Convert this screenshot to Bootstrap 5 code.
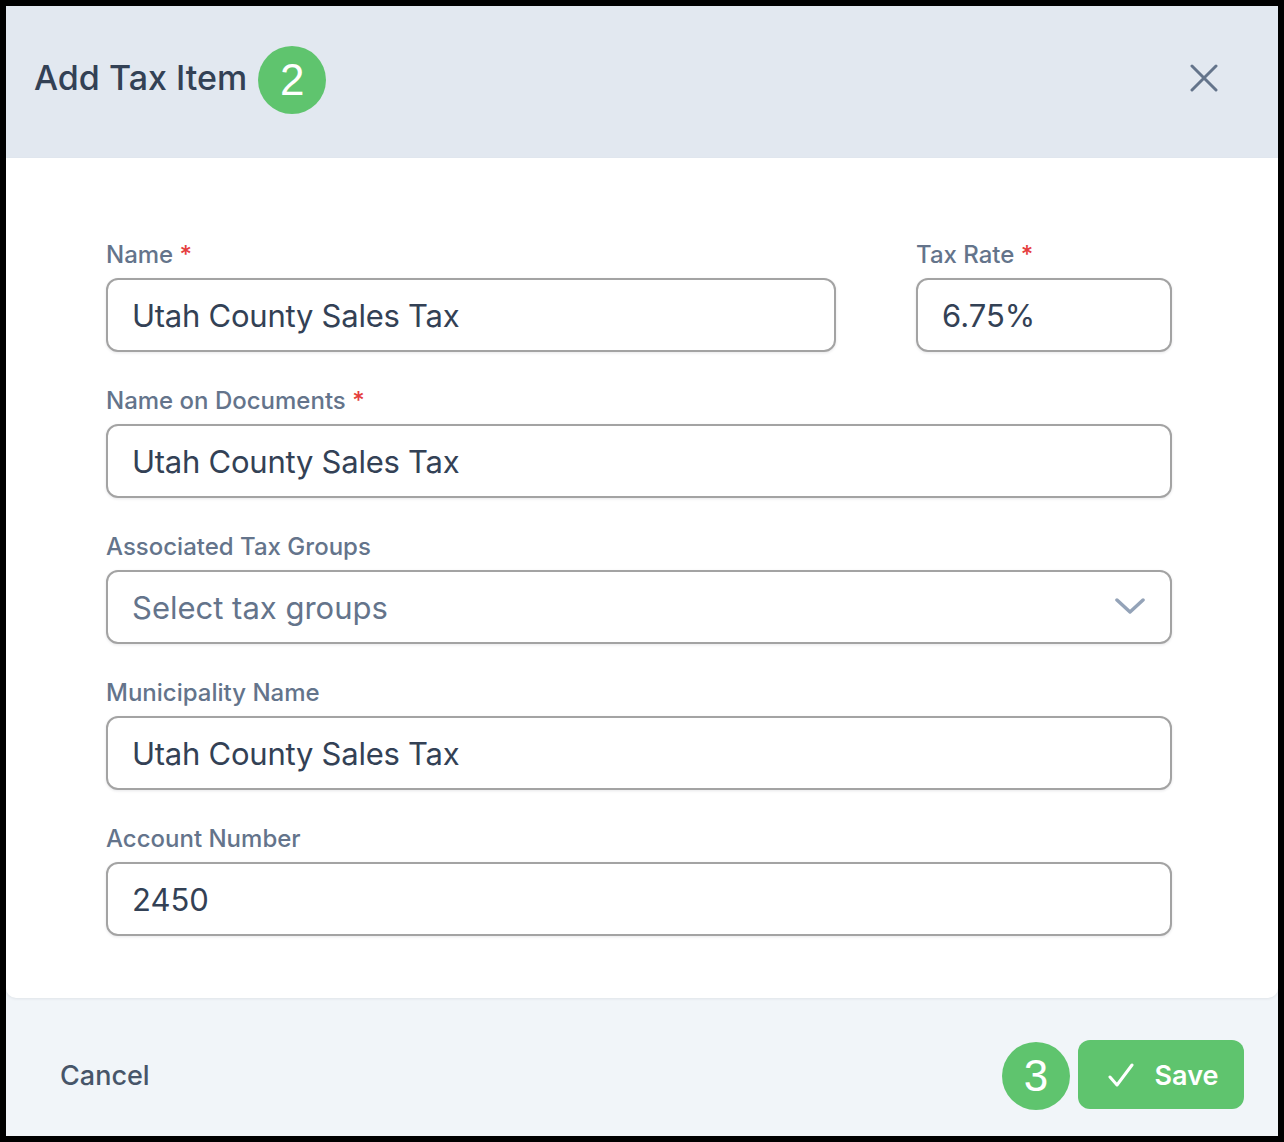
<!DOCTYPE html>
<html lang="en">
<head>
<meta charset="utf-8">
<title>Add Tax Item</title>
<link rel="stylesheet" href="https://cdn.jsdelivr.net/npm/bootstrap@5.3.0/dist/css/bootstrap.min.css">
<style>
html,body{height:100%;margin:0;background:#000;}
body{font-family:Inter,"Liberation Sans",sans-serif;color:#334155;}
.frame-box{position:fixed;inset:6px;display:flex;flex-direction:column;background:#f1f5f9;overflow:hidden;}
.dlg-head{height:152px;background:#e2e8f0;padding:0 60px 8px 28px;flex:none;}
.dlg-title{font-size:34px;font-weight:500;line-height:1;color:#334155;margin:0;}
.step-dot{width:68px;height:68px;border-radius:50%;background:#5fc46e;color:#fff;font-family:"Liberation Sans",Arial,sans-serif;font-size:44px;line-height:1;flex:none;}
.head-dot{margin-left:11px;margin-top:4px;}
.close-x{background:none;border:0;padding:0;width:28px;height:28px;display:block;}
.dlg-body{flex:1;background:#fff;padding:82px 106px 0 100px;border-radius:0 0 10px 10px;box-shadow:0 1px 3px rgba(15,23,42,.08);}
.dlg-foot{height:138px;flex:none;padding:15px 34px 0 54px;}
.fld{margin-bottom:34px;}
.fld-label{display:block;font-size:24px;line-height:30px;font-weight:500;color:#64748b;margin:0 0 8px;}
.fld-label b{color:#e53e3e;font-weight:500;}
.fld-input.form-control{height:74px;font-size:31px;line-height:1;padding:0 24px;color:#334155;border:2px solid #a3a3a3;border-radius:12px;box-shadow:0 1px 3px rgba(15,23,42,.1);background-color:#fff;}
.fld-input.tight-text{letter-spacing:-.25px;}
.fld-input.ph-sel{color:#64748b;}
.sel-wrap{position:relative;}
.sel-chevron{position:absolute;right:27px;top:27px;width:30px;height:18px;}
.col-name{width:730px;}
.col-rate{width:256px;}
.cancel-link{font-size:27px;font-weight:500;color:#475569;text-decoration:none;padding-top:4px;}
.save-btn.btn{width:166px;height:69px;background:#5fc46e;border:0;border-radius:12px;color:#fff;font-size:27px;font-weight:600;padding:0 0 0 4px;gap:21px;}
.save-label{padding-top:3px;}
.foot-dot{margin-right:8px;margin-top:3px;}
</style>
</head>
<body>
<div class="frame-box">
  <header class="dlg-head d-flex align-items-center justify-content-between">
    <div class="d-flex align-items-center">
      <h1 class="dlg-title">Add Tax Item</h1>
      <span class="step-dot head-dot d-flex align-items-center justify-content-center">2</span>
    </div>
    <button type="button" class="close-x" aria-label="Close">
      <svg viewBox="0 0 28 28" width="28" height="28" fill="none" stroke="#64748b" stroke-width="3" stroke-linecap="round"><path d="M2 2L26 26M26 2L2 26"/></svg>
    </button>
  </header>
  <main class="dlg-body">
    <form>
      <div class="d-flex justify-content-between">
        <div class="fld col-name">
          <label class="fld-label">Name <b>*</b></label>
          <input class="form-control fld-input tight-text" value="Utah County Sales Tax">
        </div>
        <div class="fld col-rate">
          <label class="fld-label">Tax Rate <b>*</b></label>
          <input class="form-control fld-input" value="6.75%">
        </div>
      </div>
      <div class="fld">
        <label class="fld-label">Name on Documents <b>*</b></label>
        <input class="form-control fld-input tight-text" value="Utah County Sales Tax">
      </div>
      <div class="fld">
        <label class="fld-label">Associated Tax Groups</label>
        <div class="sel-wrap">
          <div class="form-control fld-input ph-sel d-flex align-items-center">Select tax groups</div>
          <svg class="sel-chevron" viewBox="0 0 30 18" fill="none" stroke="#94a3b8" stroke-width="3.5" stroke-linecap="round" stroke-linejoin="round"><path d="M2 3L15 15L28 3"/></svg>
        </div>
      </div>
      <div class="fld">
        <label class="fld-label">Municipality Name</label>
        <input class="form-control fld-input tight-text" value="Utah County Sales Tax">
      </div>
      <div class="fld">
        <label class="fld-label">Account Number</label>
        <input class="form-control fld-input" value="2450">
      </div>
    </form>
  </main>
  <footer class="dlg-foot d-flex align-items-center justify-content-between">
    <a href="#" class="cancel-link">Cancel</a>
    <div class="d-flex align-items-center">
      <span class="step-dot foot-dot d-flex align-items-center justify-content-center">3</span>
      <button type="button" class="btn save-btn d-flex align-items-center justify-content-center">
        <svg width="26" height="24" viewBox="0 0 26 24" fill="none" stroke="#fff" stroke-width="3" stroke-linecap="round" stroke-linejoin="round"><path d="M2 14L9 22L24 2"/></svg>
        <span class="save-label">Save</span>
      </button>
    </div>
  </footer>
</div>
</body>
</html>
